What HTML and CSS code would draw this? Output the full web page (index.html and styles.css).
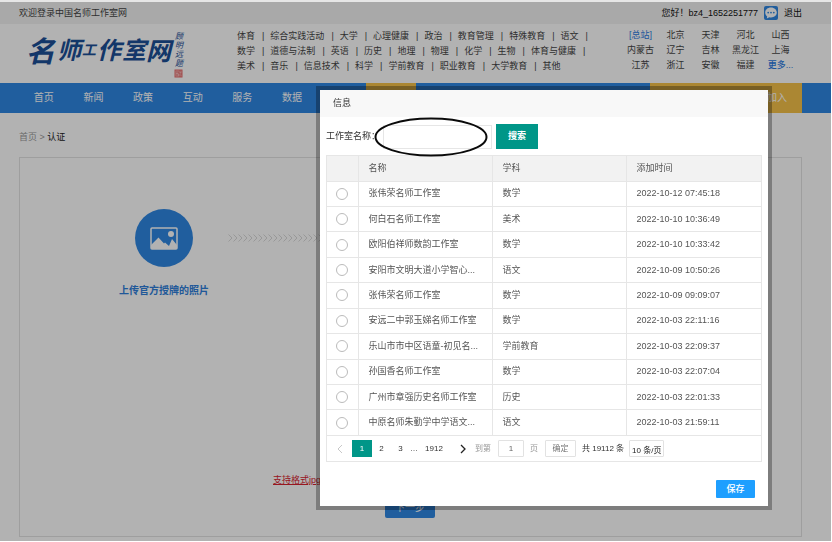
FILE: index.html
```html
<!DOCTYPE html>
<html lang="zh-CN">
<head>
  <meta charset="UTF-8" />
  <title>认证 | 中国名师工作室网</title>
  <meta name="viewport" content="width=device-width, initial-scale=1.0" />
  <link rel="stylesheet" href="styles.css">
</head>
<body>

  <div class="page">
    <div class="topbar">
      <span class="welcome">欢迎登录中国名师工作室网</span>
      <div class="user">
        <span>您好！bz4_1652251777</span>
        <a href="#" class="message" aria-label="消息">
          <svg width="14" height="14" viewBox="0 0 14 14">
            <rect width="14" height="14" rx="2" fill="#2f86e0"/>
            <path d="M7 1.500C3.600 1.500 1.200 3.800 1.200 6.600c0 1.700.8 3 2 3.900L2.800 12.500l2.500-1.200c.5.100 1.100.2 1.700.2 3.400 0 5.800-2.200 5.800-4.900S10.400 1.500 7 1.500z" fill="#fff"/>
            <circle cx="4.200" cy="6.600" r=".9" fill="#2f86e0"/>
            <circle cx="7" cy="6.600" r=".9" fill="#2f86e0"/>
            <circle cx="9.800" cy="6.600" r=".9" fill="#2f86e0"/>
          </svg>
        </a>
        <a href="#">退出</a>
      </div>
    </div>

    <header class="header">
      <a href="#" class="logo" aria-label="名师工作室网">
        <svg width="160" height="52" viewBox="0 0 160 52">
          <g class="logo-name">
            <text x="0" y="34" font-size="29">名</text>
            <text x="31" y="31" font-size="24">师</text>
            <text x="56" y="27" font-size="14">工</text>
            <text x="71" y="31" font-size="24">作</text>
            <text x="96" y="31" font-size="24">室</text>
            <text x="120" y="32" font-size="25">网</text>
          </g>
          <g class="logo-sign">
            <text x="149" y="11">顾</text>
            <text x="149" y="20">明</text>
            <text x="149" y="29">远</text>
            <text x="149" y="38">题</text>
          </g>
          <rect x="149" y="42" width="7" height="7" fill="#f6b4b4" stroke="#e86a6a"/>
          <path d="M150 44h3v2h3M151 48v-2M154 42v2M153 48h2" fill="none" stroke="#e05a5a" stroke-width=".7"/>
        </svg>
      </a>

      <div class="subjects">
        <div><a href="#">体育</a><i>|</i><a href="#">综合实践活动</a><i>|</i><a href="#">大学</a><i>|</i><a href="#">心理健康</a><i>|</i><a href="#">政治</a><i>|</i><a href="#">教育管理</a><i>|</i><a href="#">特殊教育</a><i>|</i><a href="#">语文</a><i>|</i></div>
        <div><a href="#">数学</a><i>|</i><a href="#">道德与法制</a><i>|</i><a href="#">英语</a><i>|</i><a href="#">历史</a><i>|</i><a href="#">地理</a><i>|</i><a href="#">物理</a><i>|</i><a href="#">化学</a><i>|</i><a href="#">生物</a><i>|</i><a href="#">体育与健康</a><i>|</i></div>
        <div><a href="#">美术</a><i>|</i><a href="#">音乐</a><i>|</i><a href="#">信息技术</a><i>|</i><a href="#">科学</a><i>|</i><a href="#">学前教育</a><i>|</i><a href="#">职业教育</a><i>|</i><a href="#">大学教育</a><i>|</i><a href="#">其他</a></div>
      </div>

      <div class="regions">
        <a href="#" class="blue">[总站]</a><a href="#">北京</a><a href="#">天津</a><a href="#">河北</a><a href="#">山西</a>
        <a href="#">内蒙古</a><a href="#">辽宁</a><a href="#">吉林</a><a href="#">黑龙江</a><a href="#">上海</a>
        <a href="#">江苏</a><a href="#">浙江</a><a href="#">安徽</a><a href="#">福建</a><a href="#" class="blue more">更多...</a>
      </div>
    </header>

    <nav class="navbar">
      <ul class="navbar-menu">
        <li><a href="#">首页</a></li>
        <li><a href="#">新闻</a></li>
        <li><a href="#">政策</a></li>
        <li><a href="#">互动</a></li>
        <li><a href="#">服务</a></li>
        <li><a href="#">数据</a></li>
        <li></li>
        <li class="active"></li>
      </ul>
      <a href="#" class="join">加入</a>
    </nav>

    <main class="container">
      <div class="breadcrumb"><a href="#">首页</a> &gt; <span>认证</span></div>
      <section class="panel">
        <div class="steps">
          <div class="step">
            <div class="step-icon">
              <svg width="28" height="23" viewBox="0 0 28 23">
                <rect x="1" y="1" width="26" height="21" rx="1" fill="none" stroke="#fff" stroke-width="1.500"/>
                <circle cx="21" cy="7" r="3" fill="#fff"/>
                <path d="M1 22v-4l7.500-7.500 5.500 6 1-1 4 3.500L22 12l5 6v4z" fill="#fff"/>
              </svg>
            </div>
            <div class="step-name">上传官方授牌的照片</div>
          </div>
          <svg class="arrows" width="100" height="8" viewBox="0 0 100 8">
            <defs>
              <pattern id="chevron" width="5" height="8" patternUnits="userSpaceOnUse">
                <path d="M.5.5L4 4 .5 7.500" fill="none" stroke="#dadada"/>
              </pattern>
            </defs>
            <rect width="100" height="8" fill="url(#chevron)"/>
          </svg>
        </div>
        <div class="format-tip"><u>支持格式jpg</u></div>
        <button type="button" class="next-btn">下一步</button>
      </section>
    </main>
  </div>

  <div class="shade"></div>

  <div class="dialog" role="dialog" aria-labelledby="dialogTitle">
    <div class="dialog-title" id="dialogTitle">信息</div>
    <div class="dialog-body">
      <form class="search">
        <label for="studioName">工作室名称：</label>
        <input type="text" id="studioName" />
        <button type="button">搜索</button>
        <svg class="marker" width="114" height="40" viewBox="0 0 114 40">
          <ellipse cx="57" cy="20" rx="55.500" ry="18.500" fill="none" stroke="#0a0a0a" stroke-width="2"/>
        </svg>
      </form>

      <div class="table-box">
        <table>
          <colgroup><col class="col-radio"><col class="col-name"><col class="col-subject"><col></colgroup>
          <thead>
            <tr><th></th><th>名称</th><th>学科</th><th>添加时间</th></tr>
          </thead>
          <tbody>
            <tr><td><input type="radio" name="studio" aria-label="张伟荣名师工作室"></td><td>张伟荣名师工作室</td><td>数学</td><td>2022-10-12 07:45:18</td></tr>
            <tr><td><input type="radio" name="studio" aria-label="何白石名师工作室"></td><td>何白石名师工作室</td><td>美术</td><td>2022-10-10 10:36:49</td></tr>
            <tr><td><input type="radio" name="studio" aria-label="欧阳伯祥师数韵工作室"></td><td>欧阳伯祥师数韵工作室</td><td>数学</td><td>2022-10-10 10:33:42</td></tr>
            <tr><td><input type="radio" name="studio" aria-label="安阳市文明大道小学智心"></td><td>安阳市文明大道小学智心...</td><td>语文</td><td>2022-10-09 10:50:26</td></tr>
            <tr><td><input type="radio" name="studio" aria-label="张伟荣名师工作室"></td><td>张伟荣名师工作室</td><td>数学</td><td>2022-10-09 09:09:07</td></tr>
            <tr><td><input type="radio" name="studio" aria-label="安远二中郭玉娣名师工作室"></td><td>安远二中郭玉娣名师工作室</td><td>数学</td><td>2022-10-03 22:11:16</td></tr>
            <tr><td><input type="radio" name="studio" aria-label="乐山市市中区语童-初见名"></td><td>乐山市市中区语童-初见名...</td><td>学前教育</td><td>2022-10-03 22:09:37</td></tr>
            <tr><td><input type="radio" name="studio" aria-label="孙国香名师工作室"></td><td>孙国香名师工作室</td><td>数学</td><td>2022-10-03 22:07:04</td></tr>
            <tr><td><input type="radio" name="studio" aria-label="广州市章强历史名师工作室"></td><td>广州市章强历史名师工作室</td><td>历史</td><td>2022-10-03 22:01:33</td></tr>
            <tr><td><input type="radio" name="studio" aria-label="中原名师朱勤学中学语文"></td><td>中原名师朱勤学中学语文...</td><td>语文</td><td>2022-10-03 21:59:11</td></tr>
          </tbody>
        </table>

        <div class="pager">
          <a href="#" class="page-link" aria-label="上一页">
            <svg width="6" height="10" viewBox="0 0 6 10"><path d="M5 1L1 5l4 4" fill="none" stroke="#c8c8c8"/></svg>
          </a>
          <a href="#" class="page-link current">1</a>
          <a href="#" class="page-link">2</a>
          <a href="#" class="page-link">3</a>
          <span class="dots">…</span>
          <a href="#" class="page-link last">1912</a>
          <a href="#" class="page-link next" aria-label="下一页">
            <svg width="6" height="10" viewBox="0 0 6 10"><path d="M1 1l4 4-4 4" fill="none" stroke="#222" stroke-width="1.300"/></svg>
          </a>
          <label for="pageNo">到第</label>
          <input type="text" id="pageNo" value="1" />
          <span class="unit">页</span>
          <button type="button">确定</button>
          <span class="total">共 19112 条</span>
          <select aria-label="每页条数"><option>10 条/页</option></select>
        </div>
      </div>

      <div class="dialog-foot">
        <button type="button" class="save-btn">保存</button>
      </div>
    </div>
  </div>

</body>
</html>
```

FILE: styles.css
```css
* { box-sizing: border-box; }
body {
  margin: 0; padding: 0 1px 1px 0; background: #fff; color: #444;
  border-top: 2px solid #e6e6e6;
  font: 9px/15px "Liberation Sans", "Noto Sans CJK SC", sans-serif;
}
a { color: inherit; text-decoration: none; }
button, input, select { font: inherit; margin: 0; padding: 0; }
svg { display: block; }

.topbar {
  display: flex; justify-content: space-between; align-items: center;
  height: 22px; padding: 0 29px 0 19px; background: #f3f3f3;
}
.user { display: flex; align-items: center; gap: 6px; color: #111; }

.header { display: flex; height: 59px; padding: 0 33px 0 26px; }
.logo { width: 211px; padding-top: 4px; }
.logo-name { fill: #1c4f97; font-weight: 700; font-style: italic; }
.logo-sign { fill: #1c4f97; font-size: 8px; font-style: italic; }
.subjects { padding-top: 5px; white-space: nowrap; }
.subjects i { font-style: normal; padding: 0 6px 0 7px; }
.regions {
  display: grid; grid-template-columns: repeat(5, 35px); align-content: start;
  margin-left: auto; padding-top: 4px; text-align: center; white-space: nowrap;
}
.blue { color: #2d7be0; }
.more { font-weight: 500; }

.navbar {
  display: flex; justify-content: space-between;
  height: 30px; padding: 0 29px 0 19px;
  background: #2f87e2; color: #fff; font-size: 10px; line-height: 30px;
}
.navbar-menu { display: flex; width: 397px; list-style: none; margin: 0; padding: 0; }
.navbar-menu li { flex: 1; text-align: center; }
.navbar-menu .active, .join { background: #f5c24a; }
.join { width: 152px; padding-right: 15px; text-align: right; }

.container { padding: 0 29px 4px 19px; }
.breadcrumb { padding: 17px 0 12px; color: #999; }
.breadcrumb span { color: #222; }
.panel { height: 380px; padding: 51px 81px 0 80px; border: 1px solid #e2e2e2; }
.steps { display: flex; align-items: flex-start; }
.step { width: 128px; text-align: center; }
.step-icon {
  display: flex; justify-content: center; align-items: center;
  width: 58px; height: 58px; margin: 0 auto 16px;
  border-radius: 50%; background: #2f87e2;
}
.step-name { color: #2f7fdb; font-size: 10px; font-weight: 700; }
.arrows { margin-top: 25px; }
.format-tip { width: 274px; margin: 175px auto 10px; color: #d8222f; }
.next-btn {
  display: block; width: 50px; height: 20px; margin: 0 auto;
  border: 0; border-radius: 2px; background: #2f87e2; color: #fff;
  font-size: 10px; line-height: 20px;
}

.shade { position: fixed; top: 2px; right: 1px; bottom: 1px; left: 0; background: rgba(0, 0, 0, 0.3); }

.dialog {
  position: fixed; top: 90px; left: 320px; width: 448px;
  background: #fff; box-shadow: 0 0 0 4px rgba(0, 0, 0, 0.3);
}
.dialog-title {
  height: 27px; padding-left: 13px; line-height: 27px;
  background: #f8f8f8; color: #333;
}
.dialog-body { padding: 7px 6px 8px; }

.search { display: flex; align-items: center; position: relative; color: #333; }
.search input { width: 109px; height: 24px; margin: 0 4px 0 3px; border: 1px solid #e6e6e6; }
.search button {
  width: 42px; height: 25px; border: 0; background: #009688; color: #fff; font-weight: 700;
}
.marker { position: absolute; left: 48px; top: -7px; }

.table-box { margin-top: 6px; border: 1px solid #e6e6e6; }
table {
  width: 100%; height: 280px; border-collapse: collapse; table-layout: fixed; color: #555;
}
.col-radio { width: 31px; }
.col-name, .col-subject { width: 134px; }
th { height: 25px; background: #f2f2f2; font-weight: 400; text-align: left; }
th, td {
  padding: 0 0 0 10px; white-space: nowrap;
  border-right: 1px solid #e6e6e6; border-bottom: 1px solid #e6e6e6;
}
th:last-child, td:last-child { border-right: 0; }
td:first-child { padding-left: 9px; }
td input {
  appearance: none; display: block; width: 12px; height: 12px;
  border: 1px solid #bbb; border-radius: 50%; background: #fff;
}

.pager { display: flex; align-items: center; height: 25px; padding-left: 3px; font-size: 8px; color: #333; }
.pager .page-link {
  display: flex; justify-content: center; align-items: center; width: 19px; height: 17px;
}
.pager .current { width: 20px; margin-left: 3px; background: #009688; color: #fff; }
.pager .last { width: 32px; }
.pager .next { width: 25px; }
.dots { width: 8px; text-align: center; }
.pager label, .unit { color: #999; }
.pager input, .pager button, .pager select {
  height: 17px; border: 1px solid #e2e2e2; border-radius: 1px; background: #fff;
}
.pager input { width: 26px; margin: 0 6px 0 7px; text-align: center; color: #666; }
.pager button { width: 31px; margin: 0 6px 0 7px; color: #777; }
.pager select {
  appearance: none; width: 35px; margin-left: 5px; padding: 4px 0 0 2px; line-height: 12px; color: #222;
}

.dialog-foot { padding: 18px 7px 0; text-align: right; }
.save-btn {
  width: 39px; height: 18px; border: 0; border-radius: 1px;
  background: #1e9fff; color: #fff; font-weight: 500;
}
```
